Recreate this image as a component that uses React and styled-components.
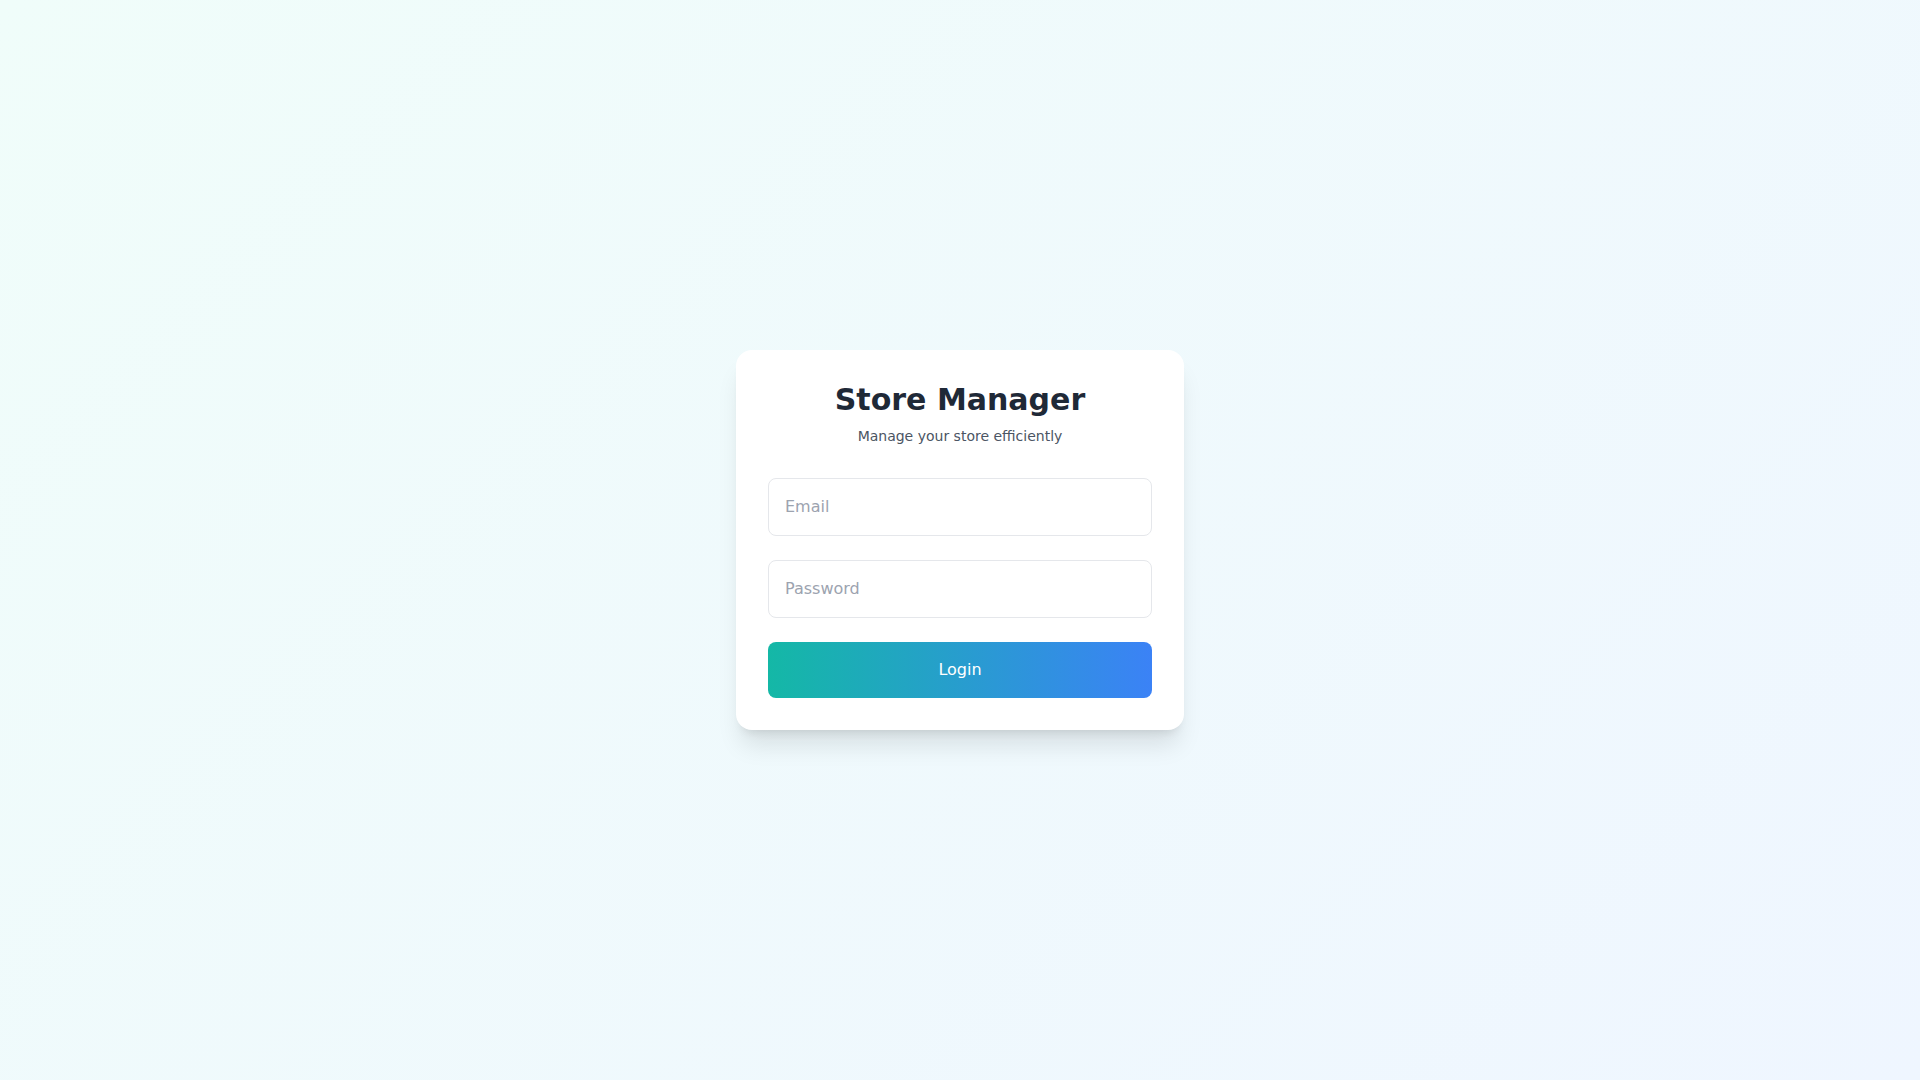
import React from 'react';
import styled, { createGlobalStyle } from 'styled-components';

const GlobalStyle = createGlobalStyle`
  * {
    box-sizing: border-box;
  }
  html, body {
    margin: 0;
    padding: 0;
  }
  body {
    font-family: "DejaVu Sans", "Noto Sans", sans-serif;
  }
`;

const Page = styled.div`
  min-height: 100vh;
  display: flex;
  align-items: center;
  justify-content: center;
  background: linear-gradient(135deg, #f0fdfa 0%, #eff6ff 100%);
`;

const Card = styled.div`
  width: 448px;
  padding: 32px;
  background: #ffffff;
  border-radius: 16px;
  box-shadow: 0 20px 25px -5px rgba(0, 0, 0, 0.1), 0 8px 10px -6px rgba(0, 0, 0, 0.1);
`;

const Header = styled.div`
  text-align: center;
  margin-bottom: 32px;
`;

const Title = styled.h1`
  margin: 0;
  font-size: 30px;
  line-height: 36px;
  font-weight: 700;
  color: #1f2937;
`;

const Subtitle = styled.p`
  margin: 8px 0 0;
  font-size: 14px;
  line-height: 20px;
  color: #4b5563;
`;

const Form = styled.form`
  display: flex;
  flex-direction: column;
  gap: 24px;
`;

const Input = styled.input`
  width: 100%;
  padding: 16px;
  font-family: inherit;
  font-size: 16px;
  line-height: 24px;
  color: #1f2937;
  border: 1px solid #e5e7eb;
  border-radius: 8px;
  outline: none;

  &::placeholder {
    color: #9ca3af;
  }
`;

const Button = styled.button`
  width: 100%;
  padding: 16px;
  font-family: inherit;
  font-size: 16px;
  line-height: 24px;
  font-weight: 500;
  color: #ffffff;
  border: none;
  border-radius: 8px;
  background: linear-gradient(90deg, #14b8a6 0%, #3b82f6 100%);
  cursor: pointer;
`;

const App = () => (
  <>
    <GlobalStyle />
    <Page>
      <Card>
        <Header>
          <Title>Store Manager</Title>
          <Subtitle>Manage your store efficiently</Subtitle>
        </Header>
        <Form onSubmit={(e) => e.preventDefault()}>
          <Input type="email" placeholder="Email" />
          <Input type="password" placeholder="Password" />
          <Button type="submit">Login</Button>
        </Form>
      </Card>
    </Page>
  </>
);

export default App;
